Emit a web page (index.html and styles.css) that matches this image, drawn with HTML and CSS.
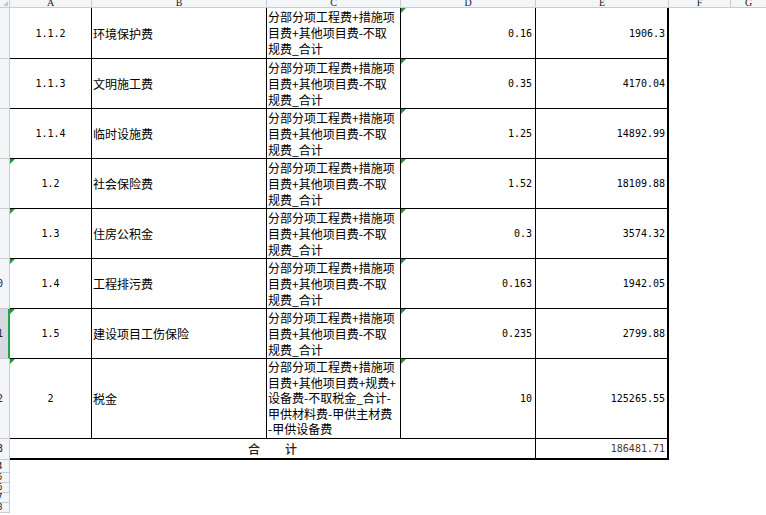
FILE: index.html
```html
<!DOCTYPE html>
<html lang="zh">
<head>
<meta charset="utf-8">
<title>Sheet</title>
<link rel="stylesheet" href="styles.css">
</head>
<body>
<div class="sheet">
  <div class="corner"></div>
  <div class="colh"><span>A</span></div>
  <div class="colh"><span>B</span></div>
  <div class="colh"><span>C</span></div>
  <div class="colh"><span>D</span></div>
  <div class="colh"><span>E</span></div>
  <div class="colh"><span>F</span></div>
  <div class="colh last"><span>G</span></div>

  <div class="rh"><span>5</span></div>
  <div class="cell ca">1.1.2</div>
  <div class="cell cb">环境保护费</div>
  <div class="cell cc">分部分项工程费+措施项<br>目费+其他项目费-不取<br>规费_合计</div>
  <div class="cell cd mk">0.16</div>
  <div class="cell ce">1906.3</div>

  <div class="rh"><span>6</span></div>
  <div class="cell ca">1.1.3</div>
  <div class="cell cb">文明施工费</div>
  <div class="cell cc">分部分项工程费+措施项<br>目费+其他项目费-不取<br>规费_合计</div>
  <div class="cell cd mk">0.35</div>
  <div class="cell ce">4170.04</div>

  <div class="rh"><span>7</span></div>
  <div class="cell ca">1.1.4</div>
  <div class="cell cb">临时设施费</div>
  <div class="cell cc">分部分项工程费+措施项<br>目费+其他项目费-不取<br>规费_合计</div>
  <div class="cell cd mk">1.25</div>
  <div class="cell ce">14892.99</div>

  <div class="rh"><span>8</span></div>
  <div class="cell ca mk">1.2</div>
  <div class="cell cb">社会保险费</div>
  <div class="cell cc">分部分项工程费+措施项<br>目费+其他项目费-不取<br>规费_合计</div>
  <div class="cell cd mk">1.52</div>
  <div class="cell ce">18109.88</div>

  <div class="rh"><span>9</span></div>
  <div class="cell ca mk">1.3</div>
  <div class="cell cb">住房公积金</div>
  <div class="cell cc">分部分项工程费+措施项<br>目费+其他项目费-不取<br>规费_合计</div>
  <div class="cell cd mk">0.3</div>
  <div class="cell ce">3574.32</div>

  <div class="rh"><span>10</span></div>
  <div class="cell ca mk">1.4</div>
  <div class="cell cb">工程排污费</div>
  <div class="cell cc">分部分项工程费+措施项<br>目费+其他项目费-不取<br>规费_合计</div>
  <div class="cell cd mk">0.163</div>
  <div class="cell ce">1942.05</div>

  <div class="rh sel"><span>11</span></div>
  <div class="cell ca mk">1.5</div>
  <div class="cell cb">建设项目工伤保险</div>
  <div class="cell cc">分部分项工程费+措施项<br>目费+其他项目费-不取<br>规费_合计</div>
  <div class="cell cd mk">0.235</div>
  <div class="cell ce">2799.88</div>

  <div class="rh"><span>12</span></div>
  <div class="cell ca mk">2</div>
  <div class="cell cb">税金</div>
  <div class="cell cc tall">分部分项工程费+措施项<br>目费+其他项目费+规费+<br>设备费-不取税金_合计-<br>甲供材料费-甲供主材费<br>-甲供设备费</div>
  <div class="cell cd mk">10</div>
  <div class="cell ce">125265.55</div>

  <div class="rh"><span>13</span></div>
  <div class="cell total-label"><span>合</span><span>计</span></div>
  <div class="cell ce total-val">186481.71</div>

  <div class="rh small"><span>14</span></div>
  <div class="rh small"><span>15</span></div>
  <div class="rh small"><span>16</span></div>
  <div class="rh small"><span>17</span></div>
  <div class="rh small"><span>18</span></div>
</div>
</body>
</html>
```

FILE: styles.css
```css
html, body {
  margin: 0;
  padding: 0;
  background: #fff;
  overflow: hidden;
}

body {
  width: 766px;
  height: 515px;
  font-family: "Noto Sans CJK SC", "Noto Sans", sans-serif;
  font-size: 12px;
  color: #000;
}

.sheet {
  display: grid;
  grid-template-columns: 10px 82px 175px 134px 135px 133px 62px 1fr;
  grid-template-rows: 8px 51px 50px 50px 50px 50px 50px 50px 80px 21px 13px 10px 10px 10px 10px;
}

.corner {
  position: relative;
  background: #f4f5f7;
  border-right: 1px solid #c6ccd6;
  border-bottom: 1px solid #c6ccd6;
  box-sizing: border-box;
}

.corner::after {
  content: "";
  position: absolute;
  right: 1px;
  bottom: 1px;
  border-bottom: 5px solid #c3c7ce;
  border-left: 5px solid transparent;
}

.colh {
  background: #f4f5f7;
  border-right: 1px solid #c6ccd6;
  border-bottom: 1px solid #c6ccd6;
  box-sizing: border-box;
  overflow: hidden;
  display: flex;
  justify-content: center;
  align-items: flex-end;
}

.colh.last {
  border-right: none;
}

.colh span {
  font-family: "Liberation Serif", serif;
  font-size: 10px;
  line-height: 9px;
  color: #222;
}

.rh {
  grid-column: 1;
  background: #f4f5f7;
  border-right: 1px solid #c6ccd6;
  border-bottom: 1px solid #c6ccd6;
  box-sizing: border-box;
  overflow: hidden;
  display: flex;
  align-items: center;
}

.rh span {
  flex: none;
  width: 30px;
  margin-left: -18px;
  text-align: center;
  font-family: "DejaVu Sans Mono", monospace;
  font-size: 10px;
  line-height: 10px;
  color: #222;
}

.rh.small span {
  font-size: 9px;
  line-height: 9px;
}

.rh.sel {
  background: #d6d9df;
  border-right: 2px solid #1fa354;
}

.cell {
  position: relative;
  box-sizing: border-box;
  border-right: 1px solid #000;
  border-bottom: 1px solid #000;
  display: flex;
  align-items: center;
  white-space: nowrap;
}

.ca {
  justify-content: center;
  font-family: "DejaVu Sans Mono", monospace;
  font-size: 10px;
}

.cb {
  padding-left: 1px;
}

.cc {
  display: block;
  padding: 1px 0 0 1px;
  line-height: 16px;
}

.cc.tall {
  padding-top: 0;
  line-height: 15.6px;
}

.cd {
  justify-content: flex-end;
  padding-right: 3px;
  font-family: "DejaVu Sans Mono", monospace;
  font-size: 10px;
}

.ce {
  justify-content: flex-end;
  padding-right: 2px;
  border-right: 2px solid #000;
  font-family: "DejaVu Sans Mono", monospace;
  font-size: 10px;
}

.mk::before {
  content: "";
  position: absolute;
  left: 0;
  top: 0;
  border-top: 5px solid #1f9a37;
  border-right: 5px solid transparent;
}

.total-label {
  grid-column: 2 / span 4;
  justify-content: center;
  gap: 25px;
  border-bottom: 2px solid #000;
  color: #2a2019;
  font-weight: 500;
}

.total-val {
  border-bottom: 2px solid #000;
  color: #4e3420;
}
```
